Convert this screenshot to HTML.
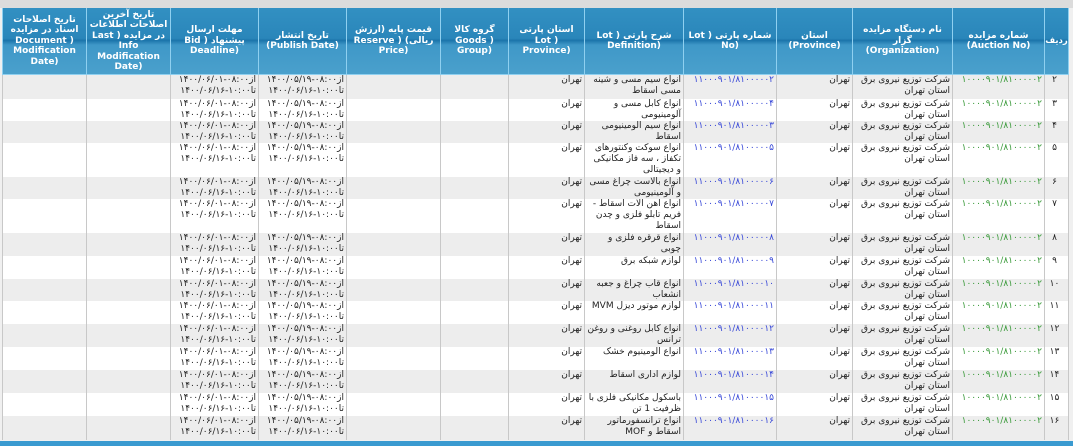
<!DOCTYPE html>
<html><head><meta charset="utf-8">
<style>
html,body{margin:0;padding:0;}
body{width:1073px;height:446px;overflow:hidden;background:#f0f0f0;position:relative;font-family:"DejaVu Sans",sans-serif;}
.top{position:absolute;left:0;top:0;width:1073px;height:8px;background:#dcdcdc;}
table{position:absolute;left:2px;top:8px;width:1066px;border-collapse:collapse;table-layout:fixed;direction:rtl;}
th{background:linear-gradient(#3290c2 0%,#2a86ba 46%,#1b74aa 49%,#3f98c8 56%,#4aa0cc 100%);color:#fff;font-weight:bold;font-size:9px;line-height:10.5px;border:1px solid #8fd0f0;border-top:none;height:66px;padding:0;text-align:center;overflow:hidden;}
th div{height:66px;overflow:hidden;display:flex;align-items:center;justify-content:center;padding:0 2px;}
th:first-child div{padding:0;font-size:8.5px;}
td{font-size:9px;line-height:11px;border-left:1px solid #c8c8c8;border-right:1px solid #c8c8c8;padding:0 2px;vertical-align:top;color:#222;overflow:hidden;text-align:right;}
tr:nth-child(odd) td{background:#ededed;}
tr:nth-child(even) td{background:#fff;}
td.n{text-align:center;padding:0 4px 0 0;}
.g{color:#3a9a3a;direction:ltr;unicode-bidi:embed;}
.b{color:#3848d8;direction:ltr;unicode-bidi:embed;}
.l{direction:ltr;unicode-bidi:embed;}
.bar{position:absolute;left:0;top:441px;width:1073px;height:5px;background:#3a9ad0;}
</style></head><body>
<div class="top"></div>
<table>
<colgroup><col style="width:24px"><col style="width:92px"><col style="width:100px"><col style="width:76px"><col style="width:93px"><col style="width:99px"><col style="width:76px"><col style="width:68px"><col style="width:94px"><col style="width:88px"><col style="width:88px"><col style="width:84px"><col style="width:84px"></colgroup>
<thead><tr>
<th><div>ردیف</div></th><th><div>شماره مزایده<br>(Auction No)</div></th><th><div>نام دستگاه مزایده گزار<br>(Organization)</div></th><th><div>استان<br>(Province)</div></th><th><div>شماره پارتی ( Lot<br>(No</div></th><th><div>شرح پارتی ( Lot<br>(Definition</div></th><th><div>استان پارتی<br>( Lot<br>(Province</div></th><th><div>گروه کالا<br>( Goods<br>(Group</div></th><th><div>قیمت پایه (ارزش<br>ریالی) ( Reserve<br>(Price</div></th><th><div>تاریخ انتشار<br>(Publish Date)</div></th><th><div>مهلت ارسال<br>پیشنهاد ( Bid<br>(Deadline</div></th><th><div>تاریخ آخرین<br>اصلاحات اطلاعات<br>در مزایده ( Last<br>Info<br>Modification<br>(Date</div></th><th><div>تاریخ اصلاحات<br>اسناد در مزایده<br>( Document<br>Modification<br>(Date</div></th>
</tr></thead>
<tbody>
<tr style="height:24px"><td class="n">۲</td><td><span class="g">۱۰۰۰۰۹۰۱/۸۱۰۰۰۰۰۲</span></td><td>شرکت توزیع نیروی برق استان تهران</td><td>تهران</td><td><span class="b">۱۱۰۰۰۹۰۱/۸۱۰۰۰۰۰۲</span></td><td>انواع سیم مسی و شینه مسی اسقاط</td><td>تهران</td><td></td><td></td><td>از<span class="l">۱۴۰۰/۰۵/۱۹-۰۸:۰۰</span><br>تا<span class="l">۱۴۰۰/۰۶/۱۶-۱۰:۰۰</span></td><td>از<span class="l">۱۴۰۰/۰۶/۰۱-۰۸:۰۰</span><br>تا<span class="l">۱۴۰۰/۰۶/۱۶-۱۰:۰۰</span></td><td></td><td></td></tr>
<tr style="height:22px"><td class="n">۳</td><td><span class="g">۱۰۰۰۰۹۰۱/۸۱۰۰۰۰۰۲</span></td><td>شرکت توزیع نیروی برق استان تهران</td><td>تهران</td><td><span class="b">۱۱۰۰۰۹۰۱/۸۱۰۰۰۰۰۴</span></td><td>انواع کابل مسی و آلومینیومی</td><td>تهران</td><td></td><td></td><td>از<span class="l">۱۴۰۰/۰۵/۱۹-۰۸:۰۰</span><br>تا<span class="l">۱۴۰۰/۰۶/۱۶-۱۰:۰۰</span></td><td>از<span class="l">۱۴۰۰/۰۶/۰۱-۰۸:۰۰</span><br>تا<span class="l">۱۴۰۰/۰۶/۱۶-۱۰:۰۰</span></td><td></td><td></td></tr>
<tr style="height:22px"><td class="n">۴</td><td><span class="g">۱۰۰۰۰۹۰۱/۸۱۰۰۰۰۰۲</span></td><td>شرکت توزیع نیروی برق استان تهران</td><td>تهران</td><td><span class="b">۱۱۰۰۰۹۰۱/۸۱۰۰۰۰۰۳</span></td><td>انواع سیم آلومینیومی اسقاط</td><td>تهران</td><td></td><td></td><td>از<span class="l">۱۴۰۰/۰۵/۱۹-۰۸:۰۰</span><br>تا<span class="l">۱۴۰۰/۰۶/۱۶-۱۰:۰۰</span></td><td>از<span class="l">۱۴۰۰/۰۶/۰۱-۰۸:۰۰</span><br>تا<span class="l">۱۴۰۰/۰۶/۱۶-۱۰:۰۰</span></td><td></td><td></td></tr>
<tr style="height:34px"><td class="n">۵</td><td><span class="g">۱۰۰۰۰۹۰۱/۸۱۰۰۰۰۰۲</span></td><td>شرکت توزیع نیروی برق استان تهران</td><td>تهران</td><td><span class="b">۱۱۰۰۰۹۰۱/۸۱۰۰۰۰۰۵</span></td><td>انواع سوکت وکنتورهای تکفاز ، سه فاز مکانیکی و دیجیتالی</td><td>تهران</td><td></td><td></td><td>از<span class="l">۱۴۰۰/۰۵/۱۹-۰۸:۰۰</span><br>تا<span class="l">۱۴۰۰/۰۶/۱۶-۱۰:۰۰</span></td><td>از<span class="l">۱۴۰۰/۰۶/۰۱-۰۸:۰۰</span><br>تا<span class="l">۱۴۰۰/۰۶/۱۶-۱۰:۰۰</span></td><td></td><td></td></tr>
<tr style="height:22px"><td class="n">۶</td><td><span class="g">۱۰۰۰۰۹۰۱/۸۱۰۰۰۰۰۲</span></td><td>شرکت توزیع نیروی برق استان تهران</td><td>تهران</td><td><span class="b">۱۱۰۰۰۹۰۱/۸۱۰۰۰۰۰۶</span></td><td>انواع بالاست چراغ مسی و آلومینیومی</td><td>تهران</td><td></td><td></td><td>از<span class="l">۱۴۰۰/۰۵/۱۹-۰۸:۰۰</span><br>تا<span class="l">۱۴۰۰/۰۶/۱۶-۱۰:۰۰</span></td><td>از<span class="l">۱۴۰۰/۰۶/۰۱-۰۸:۰۰</span><br>تا<span class="l">۱۴۰۰/۰۶/۱۶-۱۰:۰۰</span></td><td></td><td></td></tr>
<tr style="height:34px"><td class="n">۷</td><td><span class="g">۱۰۰۰۰۹۰۱/۸۱۰۰۰۰۰۲</span></td><td>شرکت توزیع نیروی برق استان تهران</td><td>تهران</td><td><span class="b">۱۱۰۰۰۹۰۱/۸۱۰۰۰۰۰۷</span></td><td>انواع آهن آلات اسقاط - فریم تابلو فلزی و چدن اسقاط</td><td>تهران</td><td></td><td></td><td>از<span class="l">۱۴۰۰/۰۵/۱۹-۰۸:۰۰</span><br>تا<span class="l">۱۴۰۰/۰۶/۱۶-۱۰:۰۰</span></td><td>از<span class="l">۱۴۰۰/۰۶/۰۱-۰۸:۰۰</span><br>تا<span class="l">۱۴۰۰/۰۶/۱۶-۱۰:۰۰</span></td><td></td><td></td></tr>
<tr style="height:23px"><td class="n">۸</td><td><span class="g">۱۰۰۰۰۹۰۱/۸۱۰۰۰۰۰۲</span></td><td>شرکت توزیع نیروی برق استان تهران</td><td>تهران</td><td><span class="b">۱۱۰۰۰۹۰۱/۸۱۰۰۰۰۰۸</span></td><td>انواع قرقره فلزی و چوبی</td><td>تهران</td><td></td><td></td><td>از<span class="l">۱۴۰۰/۰۵/۱۹-۰۸:۰۰</span><br>تا<span class="l">۱۴۰۰/۰۶/۱۶-۱۰:۰۰</span></td><td>از<span class="l">۱۴۰۰/۰۶/۰۱-۰۸:۰۰</span><br>تا<span class="l">۱۴۰۰/۰۶/۱۶-۱۰:۰۰</span></td><td></td><td></td></tr>
<tr style="height:23px"><td class="n">۹</td><td><span class="g">۱۰۰۰۰۹۰۱/۸۱۰۰۰۰۰۲</span></td><td>شرکت توزیع نیروی برق استان تهران</td><td>تهران</td><td><span class="b">۱۱۰۰۰۹۰۱/۸۱۰۰۰۰۰۹</span></td><td>لوازم شبکه برق</td><td>تهران</td><td></td><td></td><td>از<span class="l">۱۴۰۰/۰۵/۱۹-۰۸:۰۰</span><br>تا<span class="l">۱۴۰۰/۰۶/۱۶-۱۰:۰۰</span></td><td>از<span class="l">۱۴۰۰/۰۶/۰۱-۰۸:۰۰</span><br>تا<span class="l">۱۴۰۰/۰۶/۱۶-۱۰:۰۰</span></td><td></td><td></td></tr>
<tr style="height:22px"><td class="n">۱۰</td><td><span class="g">۱۰۰۰۰۹۰۱/۸۱۰۰۰۰۰۲</span></td><td>شرکت توزیع نیروی برق استان تهران</td><td>تهران</td><td><span class="b">۱۱۰۰۰۹۰۱/۸۱۰۰۰۰۱۰</span></td><td>انواع قاب چراغ و جعبه انشعاب</td><td>تهران</td><td></td><td></td><td>از<span class="l">۱۴۰۰/۰۵/۱۹-۰۸:۰۰</span><br>تا<span class="l">۱۴۰۰/۰۶/۱۶-۱۰:۰۰</span></td><td>از<span class="l">۱۴۰۰/۰۶/۰۱-۰۸:۰۰</span><br>تا<span class="l">۱۴۰۰/۰۶/۱۶-۱۰:۰۰</span></td><td></td><td></td></tr>
<tr style="height:23px"><td class="n">۱۱</td><td><span class="g">۱۰۰۰۰۹۰۱/۸۱۰۰۰۰۰۲</span></td><td>شرکت توزیع نیروی برق استان تهران</td><td>تهران</td><td><span class="b">۱۱۰۰۰۹۰۱/۸۱۰۰۰۰۱۱</span></td><td>لوازم موتور دیزل MVM</td><td>تهران</td><td></td><td></td><td>از<span class="l">۱۴۰۰/۰۵/۱۹-۰۸:۰۰</span><br>تا<span class="l">۱۴۰۰/۰۶/۱۶-۱۰:۰۰</span></td><td>از<span class="l">۱۴۰۰/۰۶/۰۱-۰۸:۰۰</span><br>تا<span class="l">۱۴۰۰/۰۶/۱۶-۱۰:۰۰</span></td><td></td><td></td></tr>
<tr style="height:23px"><td class="n">۱۲</td><td><span class="g">۱۰۰۰۰۹۰۱/۸۱۰۰۰۰۰۲</span></td><td>شرکت توزیع نیروی برق استان تهران</td><td>تهران</td><td><span class="b">۱۱۰۰۰۹۰۱/۸۱۰۰۰۰۱۲</span></td><td>انواع کابل روغنی و روغن ترانس</td><td>تهران</td><td></td><td></td><td>از<span class="l">۱۴۰۰/۰۵/۱۹-۰۸:۰۰</span><br>تا<span class="l">۱۴۰۰/۰۶/۱۶-۱۰:۰۰</span></td><td>از<span class="l">۱۴۰۰/۰۶/۰۱-۰۸:۰۰</span><br>تا<span class="l">۱۴۰۰/۰۶/۱۶-۱۰:۰۰</span></td><td></td><td></td></tr>
<tr style="height:23px"><td class="n">۱۳</td><td><span class="g">۱۰۰۰۰۹۰۱/۸۱۰۰۰۰۰۲</span></td><td>شرکت توزیع نیروی برق استان تهران</td><td>تهران</td><td><span class="b">۱۱۰۰۰۹۰۱/۸۱۰۰۰۰۱۳</span></td><td>انواع آلومینیوم خشک</td><td>تهران</td><td></td><td></td><td>از<span class="l">۱۴۰۰/۰۵/۱۹-۰۸:۰۰</span><br>تا<span class="l">۱۴۰۰/۰۶/۱۶-۱۰:۰۰</span></td><td>از<span class="l">۱۴۰۰/۰۶/۰۱-۰۸:۰۰</span><br>تا<span class="l">۱۴۰۰/۰۶/۱۶-۱۰:۰۰</span></td><td></td><td></td></tr>
<tr style="height:23px"><td class="n">۱۴</td><td><span class="g">۱۰۰۰۰۹۰۱/۸۱۰۰۰۰۰۲</span></td><td>شرکت توزیع نیروی برق استان تهران</td><td>تهران</td><td><span class="b">۱۱۰۰۰۹۰۱/۸۱۰۰۰۰۱۴</span></td><td>لوازم اداری اسقاط</td><td>تهران</td><td></td><td></td><td>از<span class="l">۱۴۰۰/۰۵/۱۹-۰۸:۰۰</span><br>تا<span class="l">۱۴۰۰/۰۶/۱۶-۱۰:۰۰</span></td><td>از<span class="l">۱۴۰۰/۰۶/۰۱-۰۸:۰۰</span><br>تا<span class="l">۱۴۰۰/۰۶/۱۶-۱۰:۰۰</span></td><td></td><td></td></tr>
<tr style="height:23px"><td class="n">۱۵</td><td><span class="g">۱۰۰۰۰۹۰۱/۸۱۰۰۰۰۰۲</span></td><td>شرکت توزیع نیروی برق استان تهران</td><td>تهران</td><td><span class="b">۱۱۰۰۰۹۰۱/۸۱۰۰۰۰۱۵</span></td><td>باسکول مکانیکی فلزی با ظرفیت 1 تن</td><td>تهران</td><td></td><td></td><td>از<span class="l">۱۴۰۰/۰۵/۱۹-۰۸:۰۰</span><br>تا<span class="l">۱۴۰۰/۰۶/۱۶-۱۰:۰۰</span></td><td>از<span class="l">۱۴۰۰/۰۶/۰۱-۰۸:۰۰</span><br>تا<span class="l">۱۴۰۰/۰۶/۱۶-۱۰:۰۰</span></td><td></td><td></td></tr>
<tr style="height:24px"><td class="n">۱۶</td><td><span class="g">۱۰۰۰۰۹۰۱/۸۱۰۰۰۰۰۲</span></td><td>شرکت توزیع نیروی برق استان تهران</td><td>تهران</td><td><span class="b">۱۱۰۰۰۹۰۱/۸۱۰۰۰۰۱۶</span></td><td>انواع ترانسفورماتور اسقاط و MOF</td><td>تهران</td><td></td><td></td><td>از<span class="l">۱۴۰۰/۰۵/۱۹-۰۸:۰۰</span><br>تا<span class="l">۱۴۰۰/۰۶/۱۶-۱۰:۰۰</span></td><td>از<span class="l">۱۴۰۰/۰۶/۰۱-۰۸:۰۰</span><br>تا<span class="l">۱۴۰۰/۰۶/۱۶-۱۰:۰۰</span></td><td></td><td></td></tr>
</tbody>
</table>
<div class="bar"></div>
</body></html>
